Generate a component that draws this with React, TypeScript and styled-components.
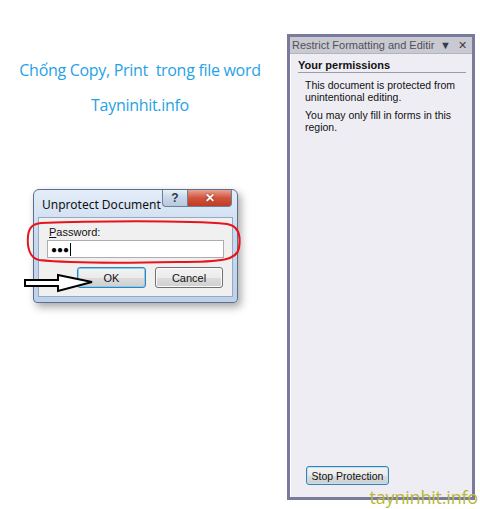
import React from "react";
import styled, { createGlobalStyle } from "styled-components";

const GlobalStyle = createGlobalStyle`
  html, body {
    margin: 0;
    padding: 0;
    background: #ffffff;
  }
  body {
    font-family: "Liberation Sans", Arial, sans-serif;
  }
`;

const Page = styled.div`
  position: relative;
  width: 480px;
  height: 509px;
  overflow: hidden;
  display: flex;
  background: #ffffff;
`;

const LeftColumn = styled.div`
  width: 287px;
  display: flex;
  flex-direction: column;
`;

const Heading = styled.div<{ $top: number }>`
  margin-top: ${(p) => p.$top}px;
  width: 280px;
  text-align: center;
  color: #1fa2e6;
  font-family: "Open Sans", "Liberation Sans", sans-serif;
  font-size: 16px;
  line-height: 20px;
  letter-spacing: -0.3px;
  white-space: pre;
`;

const DialogArea = styled.div`
  position: relative;
  margin: 74px 0 0 33px;
  width: 210px;
`;

const Window = styled.div`
  position: relative;
  box-sizing: border-box;
  width: 205px;
  border: 1px solid #5c6f8c;
  border-radius: 6px 6px 4px 4px;
  background: linear-gradient(#e4edf8, #c9daf0 40%, #bed1ea);
  padding: 0 4px 5px 4px;
  box-shadow: 3px 4px 8px rgba(0, 0, 0, 0.35);
`;

const TitleBar = styled.div`
  height: 27px;
  display: flex;
  align-items: center;
  justify-content: space-between;
  padding-left: 4px;
`;

const TitleText = styled.span`
  font-family: "Noto Sans", "Liberation Sans", sans-serif;
  font-size: 12px;
  color: #111;
  margin-top: 2px;
`;

const Caption = styled.div`
  display: flex;
  align-self: flex-start;
  margin-right: 1px;
`;

const CaptionButton = styled.div<{ $w: number; $red?: boolean }>`
  width: ${(p) => p.$w}px;
  height: 16px;
  border: 1px solid #6d7e95;
  border-top: none;
  display: flex;
  align-items: center;
  justify-content: center;
  font-family: "Liberation Sans", sans-serif;
  font-weight: bold;
  font-size: 12px;
  color: ${(p) => (p.$red ? "#ffffff" : "#2d3a4c")};
  background: ${(p) =>
    p.$red
      ? "linear-gradient(#e8a393, #d0533c 50%, #c23b22)"
      : "linear-gradient(#e9f0f8, #c8d6e8 50%, #b8c9df)"};
  border-radius: ${(p) => (p.$red ? "0 0 4px 0" : "0 0 0 4px")};
  border-left: ${(p) => (p.$red ? "none" : "1px solid #6d7e95")};
  text-shadow: ${(p) => (p.$red ? "0 0 2px #7a1c10" : "none")};
`;

const Client = styled.div`
  background: #f0f0f0;
  border: 1px solid #98a8bf;
  padding: 7px 8px 8px 8px;
  display: flex;
  flex-direction: column;
`;

const Label = styled.div`
  font-family: "Liberation Sans", sans-serif;
  font-size: 11px;
  color: #111;
  padding-left: 2px;
  line-height: 14px;
  u {
    text-decoration: underline;
  }
`;

const Field = styled.div`
  margin-top: 1px;
  height: 18px;
  border: 1px solid #abadb3;
  background: #ffffff;
  display: flex;
  align-items: center;
  padding-left: 3px;
  font-size: 10px;
  color: #000;
  box-sizing: border-box;
`;

const Caret = styled.span`
  display: inline-block;
  width: 1px;
  height: 13px;
  background: #000;
  margin-left: 1px;
`;

const ButtonRow = styled.div`
  margin-top: 9px;
  display: flex;
  justify-content: flex-end;
  gap: 9px;
  padding-right: 1px;
`;

const DialogButton = styled.div<{ $focus?: boolean }>`
  width: ${(p) => (p.$focus ? 69 : 68)}px;
  height: 21px;
  box-sizing: border-box;
  border: 1px solid ${(p) => (p.$focus ? "#3c7fb1" : "#707070")};
  border-radius: 3px;
  background: linear-gradient(#f3f3f3, #ebebeb 50%, #dddddd 51%, #cfcfcf);
  box-shadow: ${(p) => (p.$focus ? "inset 0 0 0 1px #7fd1f5" : "inset 0 0 0 1px #fcfcfc")};
  display: flex;
  align-items: center;
  justify-content: center;
  font-family: "Liberation Sans", sans-serif;
  font-size: 11px;
  color: #111;
`;

const Overlay = styled.svg`
  position: absolute;
  pointer-events: none;
  overflow: visible;
`;

const Panel = styled.div`
  margin-top: 34px;
  width: 188px;
  height: 466px;
  box-sizing: border-box;
  border: 3px solid #7a7b9c;
  background: #eeedf4;
  display: flex;
  flex-direction: column;
`;

const PanelHeader = styled.div`
  height: 16px;
  background: #c9c9d1;
  border-bottom: 1px solid #b4b4c0;
  display: flex;
  align-items: center;
  padding-left: 2px;
  padding-right: 5px;
  color: #50505a;
  font-family: "Liberation Sans", sans-serif;
  font-size: 11px;
  white-space: nowrap;
  overflow: hidden;
`;

const HeaderTitle = styled.span`
  flex: 1;
  overflow: hidden;
`;

const HeaderIcon = styled.span<{ $gap: number }>`
  margin-left: ${(p) => p.$gap}px;
  font-size: 11px;
  color: #3b3b46;
`;

const PanelBody = styled.div`
  flex: 1;
  display: flex;
  flex-direction: column;
  padding: 5px 4px 12px 7px;
  border-left: 1px solid #ffffff;
`;

const SectionTitle = styled.div`
  font-family: "Liberation Sans", sans-serif;
  font-weight: bold;
  font-size: 11px;
  color: #111;
  padding-bottom: 1px;
  border-bottom: 1px solid #9a9aaa;
  margin-right: 2px;
`;

const Paragraph = styled.p`
  margin: 6px 0 0 7px;
  font-family: "Liberation Sans", sans-serif;
  font-size: 10.5px;
  line-height: 12px;
  color: #111;
`;

const Spacer = styled.div`
  flex: 1;
`;

const StopButton = styled.div`
  margin-left: 8px;
  width: 83px;
  height: 19px;
  box-sizing: border-box;
  border: 1px solid #3c7fb1;
  border-radius: 3px;
  background: linear-gradient(#f3f3f3, #ebebeb 50%, #dddddd 51%, #cfcfcf);
  box-shadow: inset 0 0 0 1px #b9e3f7;
  display: flex;
  align-items: center;
  justify-content: center;
  font-family: "Liberation Sans", sans-serif;
  font-size: 10.5px;
  color: #111;
`;

const Watermark = styled.div`
  position: absolute;
  right: 2px;
  bottom: 1px;
  font-family: "Open Sans", "Liberation Sans", sans-serif;
  font-size: 18px;
  line-height: 22px;
  color: #b8b83a;
  letter-spacing: -0.2px;
`;

export default function App() {
  return (
    <>
      <GlobalStyle />
      <Page>
        <LeftColumn>
          <Heading $top={60}>{"Chống Copy, Print  trong file word"}</Heading>
          <Heading $top={15}>Tayninhit.info</Heading>
          <DialogArea>
            <Window>
              <TitleBar>
                <TitleText>Unprotect Document</TitleText>
                <Caption>
                  <CaptionButton $w={24}>?</CaptionButton>
                  <CaptionButton $w={43} $red>
                    ✕
                  </CaptionButton>
                </Caption>
              </TitleBar>
              <Client>
                <Label>
                  <u>P</u>assword:
                </Label>
                <Field>
                  ●●●<Caret />
                </Field>
                <ButtonRow>
                  <DialogButton $focus>OK</DialogButton>
                  <DialogButton>Cancel</DialogButton>
                </ButtonRow>
              </Client>
            </Window>
            <Overlay
              style={{ left: -6, top: 31 }}
              width="214"
              height="44"
              viewBox="0 0 214 44"
            >
              <path
                d="M14 3 C 60 1, 160 0, 200 4 C 212 6, 214 16, 212 28 C 210 40, 196 42, 150 42 C 100 43, 40 43, 12 40 C 2 38, 0 26, 1 16 C 2 7, 6 4, 14 3 Z"
                fill="none"
                stroke="#e8141c"
                strokeWidth="2"
              />
            </Overlay>
            <Overlay
              style={{ left: -9, top: 84 }}
              width="70"
              height="22"
              viewBox="0 0 70 22"
            >
              <path
                d="M1 7 L34 7 L34 2 L68 9 L34 18 L34 13 L1 13 Z"
                fill="#ffffff"
                stroke="#000000"
                strokeWidth="2"
                strokeLinejoin="miter"
              />
            </Overlay>
          </DialogArea>
        </LeftColumn>
        <Panel>
          <PanelHeader>
            <HeaderTitle>Restrict Formatting and Editir</HeaderTitle>
            <HeaderIcon $gap={2}>▼</HeaderIcon>
            <HeaderIcon $gap={7}>✕</HeaderIcon>
          </PanelHeader>
          <PanelBody>
            <SectionTitle>Your permissions</SectionTitle>
            <Paragraph>
              This document is protected from
              <br />
              unintentional editing.
            </Paragraph>
            <Paragraph>
              You may only fill in forms in this
              <br />
              region.
            </Paragraph>
            <Spacer />
            <StopButton>Stop Protection</StopButton>
          </PanelBody>
        </Panel>
        <Watermark>tayninhit.info</Watermark>
      </Page>
    </>
  );
}
